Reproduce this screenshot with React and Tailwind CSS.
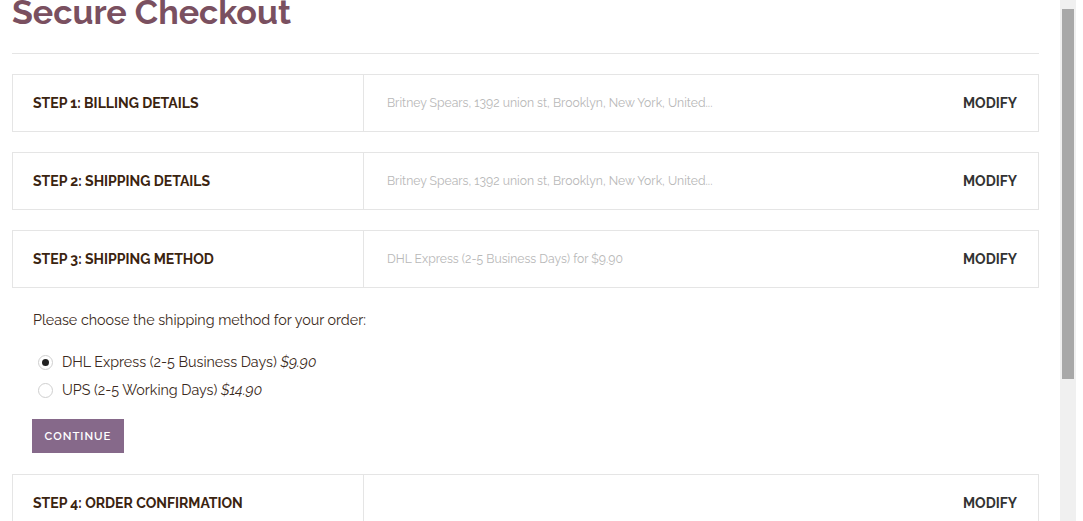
import { useState } from 'react';

const steps = [
  { title: 'STEP 1: BILLING DETAILS', summary: 'Britney Spears, 1392 union st, Brooklyn, New York, United...' },
  { title: 'STEP 2: SHIPPING DETAILS', summary: 'Britney Spears, 1392 union st, Brooklyn, New York, United...' },
  { title: 'STEP 3: SHIPPING METHOD', summary: 'DHL Express (2-5 Business Days) for $9.90' },
];

const methods = [
  { id: 'dhl', label: 'DHL Express (2-5 Business Days)', price: '$9.90' },
  { id: 'ups', label: 'UPS (2-5 Working Days)', price: '$14.90' },
];

function StepBar({ title, summary }) {
  return (
    <div className="flex h-[58px] border border-[#e5e5e5] bg-white">
      <div className="flex w-[351px] shrink-0 items-center border-r border-[#e5e5e5] pl-5">
        <span className="text-[14px] font-bold text-[#3b2410]">{title}</span>
      </div>
      <div className="flex flex-1 items-center justify-between pl-[23px] pr-[21px]">
        <span className="text-[12.2px] text-[#b8b8b8]">{summary}</span>
        <button className="text-[14px] font-bold text-[#333]">MODIFY</button>
      </div>
    </div>
  );
}

export default function App() {
  const [method, setMethod] = useState('dhl');

  return (
    <div className="flex h-[521px] overflow-hidden bg-white" style={{ fontFamily: 'Raleway, Lato, "Open Sans", sans-serif' }}>
      <div className="flex-1 pl-3 pr-[21px]">
        <h1 className="mt-[-9px] text-[34px] font-bold leading-[42px] text-[#7a5060]">Secure Checkout</h1>
        <div className="mt-5 border-t border-[#e5e5e5]" />

        <div className="mt-5 flex flex-col gap-5">
          {steps.map((s) => (
            <StepBar key={s.title} title={s.title} summary={s.summary} />
          ))}
        </div>

        <div className="px-5 pt-[22px] pb-[21px]">
          <p className="pl-px text-[14.3px] text-[#3b2a20]">Please choose the shipping method for your order:</p>
          <div className="mt-[22px] flex flex-col gap-[9px]">
            {methods.map((m) => (
              <label key={m.id} className="flex h-[19px] cursor-pointer items-center gap-[9px] pl-[6px] text-[14.3px] text-[#3b2a20]">
                <span
                  onClick={() => setMethod(m.id)}
                  className="flex h-[15px] w-[15px] items-center justify-center rounded-full border border-[#cfcfcf] bg-white"
                >
                  {method === m.id && <span className="h-[7px] w-[7px] rounded-full bg-[#222]" />}
                </span>
                <span>
                  {m.label} <em>{m.price}</em>
                </span>
              </label>
            ))}
          </div>
          <button className="mt-[19px] h-[34px] w-[92px] bg-[#86698a] text-[11.3px] font-semibold tracking-[1px] text-white">
            CONTINUE
          </button>
        </div>

        <StepBar title="STEP 4: ORDER CONFIRMATION" summary="" />
      </div>

      <div className="w-[16px] shrink-0 bg-[#f0f0f0] px-[2px] pt-[9px]">
        <div className="h-[370px] w-full bg-[#a8a8a8]" />
      </div>
      <div className="w-[7px] shrink-0 bg-white" />
    </div>
  );
}
